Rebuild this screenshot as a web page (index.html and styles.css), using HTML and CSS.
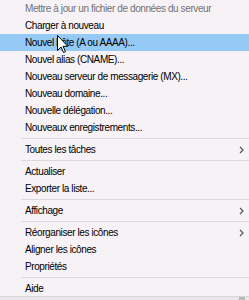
FILE: index.html
```html
<!DOCTYPE html>
<html lang="fr">
<head>
  <meta charset="UTF-8">
  <title>Menu contextuel</title>
  <link rel="stylesheet" href="styles.css">
</head>
<body>
<div class="menu">
  <div class="item disabled">Mettre à jour un fichier de données du serveur</div>
  <div class="item">Charger à nouveau</div>
  <div class="item active">Nouvel hôte (A ou AAAA)...</div>
  <div class="item">Nouvel alias (CNAME)...</div>
  <div class="item">Nouveau serveur de messagerie (MX)...</div>
  <div class="item">Nouveau domaine...</div>
  <div class="item">Nouvelle délégation...</div>
  <div class="item">Nouveaux enregistrements...</div>
  <div class="sep"></div>
  <div class="item sub">Toutes les tâches
    <svg class="arrow" width="5" height="8" viewBox="0 0 5 8"><path d="M1 1 L4 4 L1 7" fill="none" stroke="#555" stroke-width="1.2"/></svg>
  </div>
  <div class="sep"></div>
  <div class="item">Actualiser</div>
  <div class="item">Exporter la liste...</div>
  <div class="sep"></div>
  <div class="item sub">Affichage
    <svg class="arrow" width="5" height="8" viewBox="0 0 5 8"><path d="M1 1 L4 4 L1 7" fill="none" stroke="#555" stroke-width="1.2"/></svg>
  </div>
  <div class="sep"></div>
  <div class="item sub">Réorganiser les icônes
    <svg class="arrow" width="5" height="8" viewBox="0 0 5 8"><path d="M1 1 L4 4 L1 7" fill="none" stroke="#555" stroke-width="1.2"/></svg>
  </div>
  <div class="item">Aligner les icônes</div>
  <div class="item">Propriétés</div>
  <div class="sep"></div>
  <div class="item">Aide</div>

  <!-- curseur de la souris -->
  <svg class="cursor" width="12" height="19" viewBox="0 0 12 19">
    <path d="M0.5 0.5 L0.5 15.5 L4 12 L6.5 17.5 L8.5 16.6 L6 11.3 L10.8 11.3 Z" fill="#fff" stroke="#000" stroke-width="1" stroke-linejoin="miter"/>
  </svg>
</div>
<div class="bottom">
  <span class="grip"></span>
</div>
</body>
</html>
```
FILE: styles.css
```css
body {
  margin: 0;
  background: #e9e7e9;
  font-family: "Liberation Sans", Arial, sans-serif;
  font-size: 10px;
  letter-spacing: -0.4px;
  color: #000;
}

.menu {
  position: relative;
  background: #f6f2f6;
  border-bottom: 1px solid #d8d6d8;
  height: 297px;
  box-sizing: border-box;
  overflow: hidden;
}

.item {
  height: 17px;
  line-height: 17px;
  padding-left: 25px;
  padding-right: 5px;
  display: flex;
  align-items: center;
  white-space: nowrap;
}

.item.disabled {
  color: #737173;
}

.item.active {
  background: #95c9f6;
}

.sub {
  justify-content: space-between;
}

.sep {
  height: 1px;
  margin: 2px 0 2px 21px;
  background: #dcd9dc;
}

.cursor {
  position: absolute;
  left: 57px;
  top: 35px;
}

.bottom {
  height: 3px;
  display: flex;
  justify-content: flex-end;
}

.grip {
  width: 6px;
  height: 3px;
  margin-right: 4px;
  background: #b9b9b9;
}
```
